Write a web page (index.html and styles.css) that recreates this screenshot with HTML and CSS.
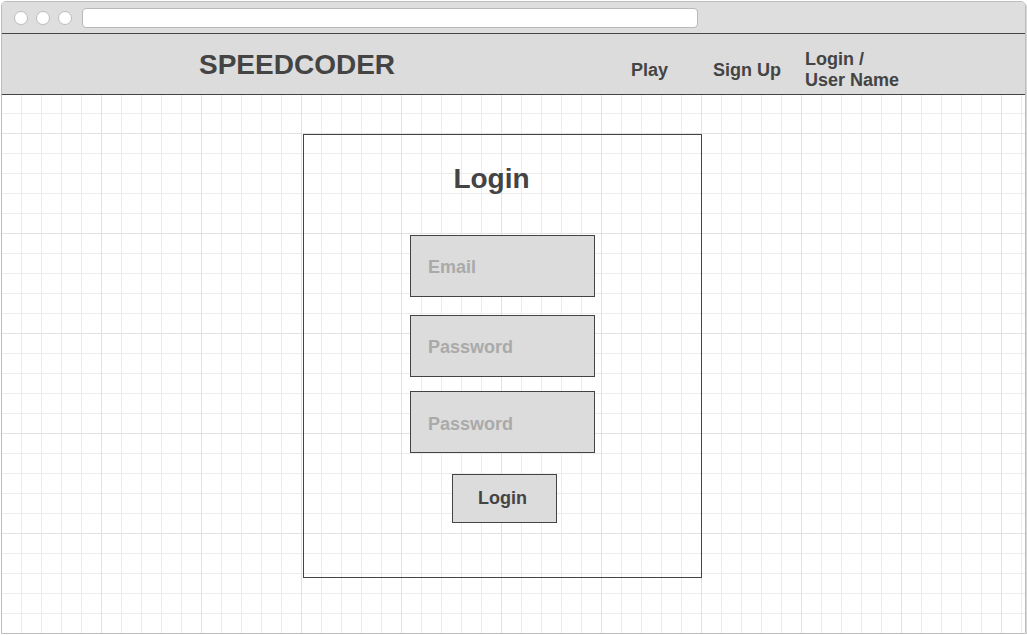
FILE: index.html
```html
<!DOCTYPE html>
<html lang="en">
<head>
<meta charset="utf-8">
<title>Speedcoder – Login</title>
<link rel="stylesheet" href="styles.css">
</head>
<body>
<div class="window">
  <div class="chrome">
    <span class="dot"></span>
    <span class="dot"></span>
    <span class="dot"></span>
    <div class="address"></div>
  </div>
  <header class="site-header">
    <div class="logo">SPEEDCODER</div>
    <nav class="nav">
      <a class="nav-item nav-play">Play</a>
      <a class="nav-item nav-signup">Sign Up</a>
      <a class="nav-item nav-login">Login /<br>User Name</a>
    </nav>
  </header>
  <main class="canvas">
    <form class="login-box">
      <h1 class="login-title">Login</h1>
      <input class="field field-email" type="email" placeholder="Email">
      <input class="field field-pw1" type="password" placeholder="Password">
      <input class="field field-pw2" type="password" placeholder="Password">
      <button class="login-btn" type="button">Login</button>
    </form>
  </main>
</div>
</body>
</html>
```
FILE: styles.css
```css
* { box-sizing: border-box; }

html, body {
  margin: 0;
  padding: 0;
  background: #ffffff;
}

body {
  padding: 1px 0 0 1px;
  font-family: "Liberation Sans", Arial, Helvetica, sans-serif;
  color: #444444;
}

.window {
  width: 1025px;
  height: 633px;
  border: 1px solid #bdbdbd;
  border-radius: 5px 5px 0 0;
  box-shadow: 1px 1px 0 #d6d6d6;
  display: flex;
  flex-direction: column;
  overflow: hidden;
}

.chrome {
  height: 31px;
  flex: none;
  background: #dedede;
  display: flex;
  align-items: center;
  padding-left: 12px;
  gap: 8px;
}

.dot {
  width: 14px;
  height: 14px;
  border-radius: 50%;
  background: #ffffff;
  border: 1px solid #bcbcbc;
}

.address {
  margin-left: 2px;
  width: 616px;
  height: 20px;
  background: #ffffff;
  border: 1px solid #b8b8b8;
  border-radius: 4px;
}

.site-header {
  flex: none;
  height: 62px;
  margin: 0 -1px;
  background: #dcdcdc;
  border: 1px solid #444444;
  display: flex;
  align-items: flex-start;
}

.logo {
  margin-top: 15px;
  padding-left: 197px;
  font-size: 28px;
  line-height: 32px;
  font-weight: bold;
  color: #444444;
}

.nav {
  margin-left: auto;
  padding-right: 126px;
  display: flex;
  align-items: flex-start;
}

.nav-item {
  font-size: 18px;
  line-height: 21px;
  font-weight: bold;
  color: #444444;
}

.nav-play { margin-top: 26px; }
.nav-signup { margin-top: 26px; margin-left: 45px; }
.nav-login { margin-top: 15px; margin-left: 24px; }

.canvas {
  flex: 1;
  padding: 39px 0 0 301px;
  background-color: #ffffff;
  background-image:
    linear-gradient(to right, #e2e2e2 1px, transparent 1px),
    linear-gradient(to bottom, #e2e2e2 1px, transparent 1px),
    linear-gradient(to right, #ececec 1px, transparent 1px),
    linear-gradient(to bottom, #ececec 1px, transparent 1px);
  background-size: 100px 100px, 100px 100px, 20px 20px, 20px 20px;
  background-position: 99px 0, 0 38px, 19px 0, 0 18px;
}

.login-box {
  width: 399px;
  height: 444px;
  border: 1px solid #444444;
  margin: 0;
  display: flex;
  flex-direction: column;
  align-items: center;
}

.login-title {
  margin: 28px 22px 0 0;
  font-size: 28px;
  line-height: 32px;
  font-weight: bold;
  color: #444444;
}

.field {
  width: 185px;
  height: 62px;
  background: #dcdcdc;
  border: 1px solid #444444;
  border-radius: 0;
  padding: 2px 0 0 17px;
  font-family: "Liberation Sans", Arial, Helvetica, sans-serif;
  font-size: 18px;
  font-weight: bold;
  color: #444444;
  outline: none;
}

.field::placeholder {
  color: #aaaaaa;
  opacity: 1;
}

.field-email { margin-top: 40px; }
.field-pw1 { margin-top: 18px; }
.field-pw2 { margin-top: 14px; padding-top: 5px; }

.login-btn {
  margin: 21px 0 0 4px;
  width: 105px;
  height: 49px;
  background: #dcdcdc;
  border: 1px solid #444444;
  border-radius: 0;
  font-family: "Liberation Sans", Arial, Helvetica, sans-serif;
  font-size: 18px;
  font-weight: bold;
  color: #444444;
  padding: 0 4px 0 0;
}
```
